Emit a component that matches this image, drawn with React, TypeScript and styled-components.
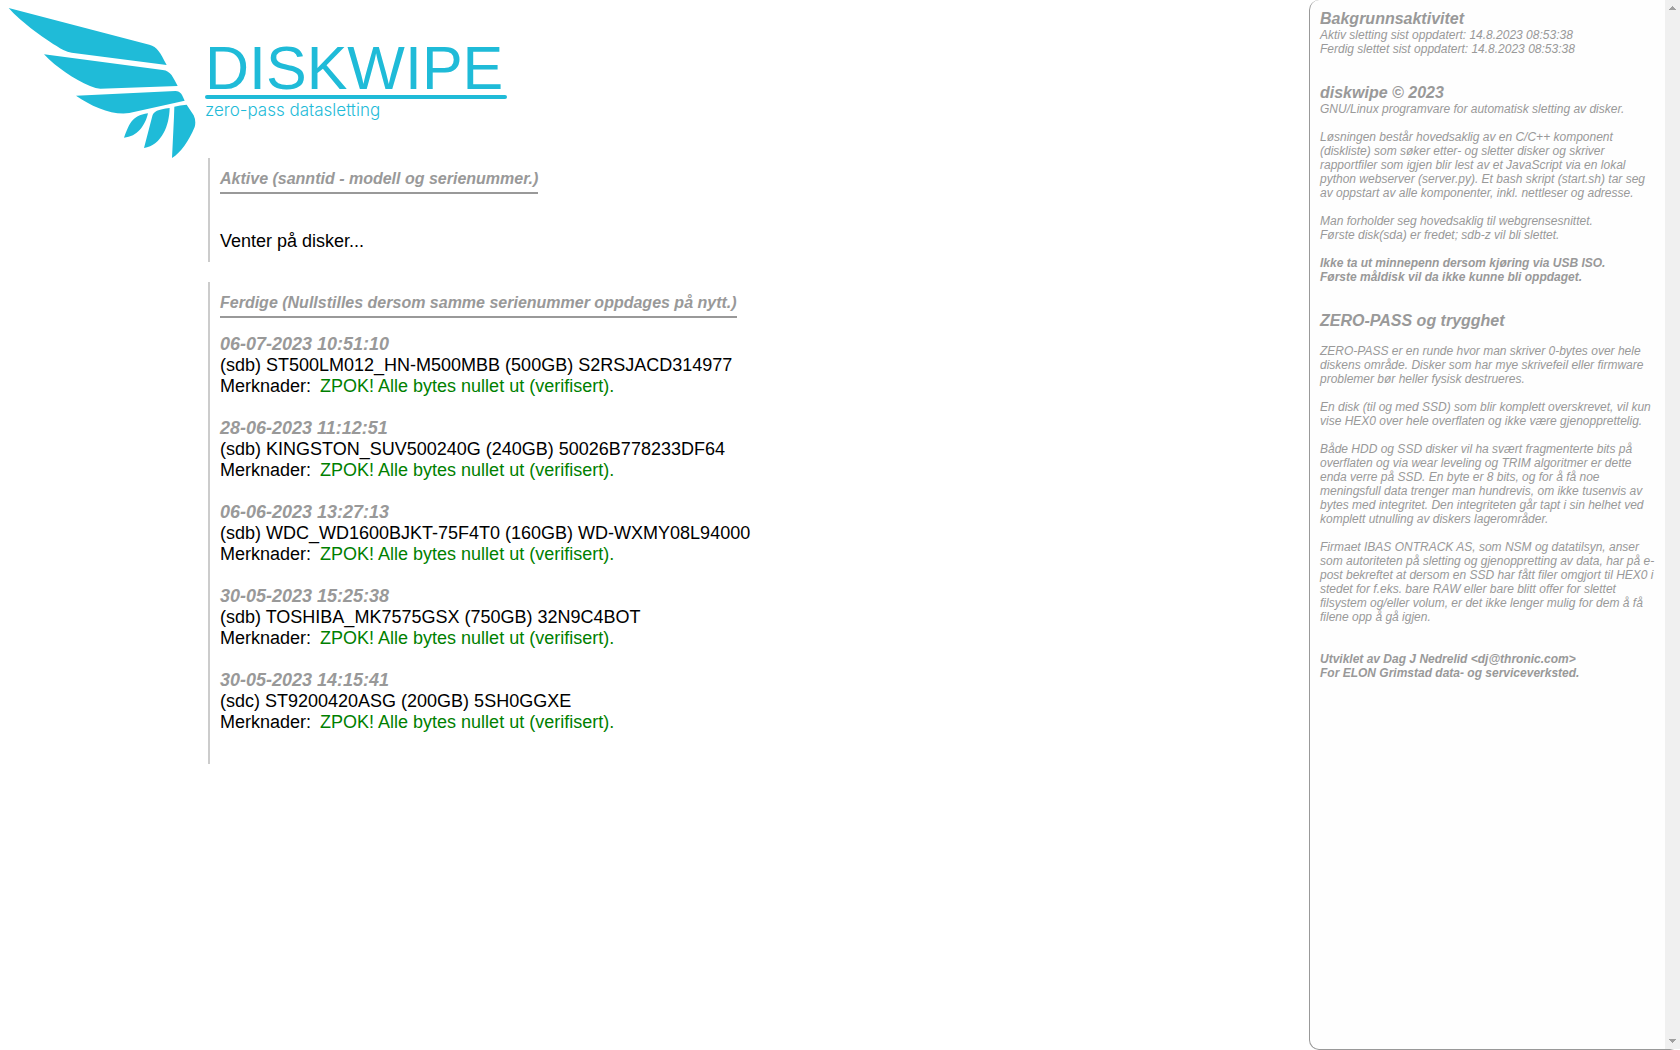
import React, { useRef } from "react";
import styled, { createGlobalStyle } from "styled-components";

const BRAND = "#1fbbd8";
const GREY = "#999";

const GlobalStyle = createGlobalStyle`
  *, *::before, *::after { box-sizing: border-box; }
  body {
    margin: 0;
    background: #fff;
    color: #000;
    font-family: "Liberation Sans", Arial, sans-serif;
    font-size: 18px;
    line-height: 21px;
  }
`;

const Page = styled.div`
  display: grid;
  grid-template-columns: minmax(0, 1fr) 371px;
  align-items: start;
  min-height: 100vh;
`;

const Main = styled.main`
  display: flex;
  flex-direction: column;
  gap: 20px;
  padding: 8px;
`;

const Top = styled.div``;

const Logo = styled.header`
  display: flex;
  gap: 9px;
  height: 150px;
  color: ${BRAND};
`;

const Wing = styled.svg`
  flex: none;
  width: 188px;
  height: 150px;
  fill: currentColor;
`;

const Wordmark = styled.div`
  display: flex;
  flex-direction: column;
  width: 302px;
  padding-top: 34px;
  white-space: nowrap;
`;

const Brand = styled.h1`
  margin: 0 0 1px;
  font-size: 61px;
  font-weight: normal;
  line-height: 52px;
`;

const Rule = styled.div`
  flex: none;
  height: 4px;
  border-radius: 2px;
  background: currentColor;
`;

const Tagline = styled.div`
  font-family: Inter, "Open Sans", sans-serif;
  font-size: 17px;
  font-weight: 300;
  line-height: 22px;
`;

const Section = styled.section`
  margin-left: 200px;
  padding: 12px 10px 10px;
  border-left: 2px solid #ccc;
`;

const SectionTitle = styled.h2`
  width: fit-content;
  margin: 0 0 16px;
  padding-bottom: 4px;
  border-bottom: 2px solid ${GREY};
  color: ${GREY};
  font-size: 16px;
  font-style: italic;
  line-height: 18px;
`;

const Waiting = styled.p`
  margin: 0;
  padding-top: 21px;
`;

const Records = styled.ul`
  margin: 0;
  padding: 0;
  list-style: none;
`;

const RecordItem = styled.li`
  padding-bottom: 21px;
`;

const Stamp = styled.time`
  display: block;
  color: ${GREY};
  font-style: italic;
  font-weight: bold;
`;

const Line = styled.div``;

const Result = styled.span`
  margin-left: 4px;
  color: green;
`;

const Side = styled.aside`
  position: sticky;
  top: 0;
  display: flex;
  height: 100vh;
  border: 0 solid ${GREY};
  border-width: 0 0 1px 1px;
  border-radius: 10px;
  background: #fefefe;
`;

const SideText = styled.div`
  flex: 1;
  min-width: 0;
  padding: 10px;
  overflow-y: auto;
  scrollbar-width: none;
  color: ${GREY};
  font-size: 12px;
  font-style: italic;
  line-height: 14px;
`;

const SideBlock = styled.section`
  margin-bottom: 28px;
`;

const SideTitle = styled.h2<{ $spaced?: boolean }>`
  margin: 0 0 ${(p) => (p.$spaced ? 14 : 0)}px;
  font-size: 16px;
  line-height: 18px;
`;

const Para = styled.p<{ $strong?: boolean }>`
  margin: 0;
  font-weight: ${(p) => (p.$strong ? "bold" : "normal")};
  & + & { margin-top: 14px; }
`;

const ScrollTrack = styled.div`
  display: flex;
  flex: none;
  flex-direction: column;
  justify-content: space-between;
  width: 15px;
  background: #f0f0f0;
`;

const ScrollButton = styled.button`
  display: block;
  width: 15px;
  height: 16px;
  padding: 6px 4px;
  border: 0;
  background: none;
  svg { display: block; fill: #a0a0a0; }
`;

const records = [
  ["06-07-2023 10:51:10", "(sdb) ST500LM012_HN-M500MBB (500GB) S2RSJACD314977"],
  ["28-06-2023 11:12:51", "(sdb) KINGSTON_SUV500240G (240GB) 50026B778233DF64"],
  ["06-06-2023 13:27:13", "(sdb) WDC_WD1600BJKT-75F4T0 (160GB) WD-WXMY08L94000"],
  ["30-05-2023 15:25:38", "(sdb) TOSHIBA_MK7575GSX (750GB) 32N9C4BOT"],
  ["30-05-2023 14:15:41", "(sdc) ST9200420ASG (200GB) 5SH0GGXE"],
];

export default function App() {
  const side = useRef<HTMLDivElement>(null);
  const scroll = (top: number) => side.current?.scrollBy({ top });

  return (
    <>
      <GlobalStyle />
      <Page>
        <Main>
          <Top>
            <Logo>
              <Wing viewBox="24 24 564 450" aria-hidden="true">
                <path d="M26 24L448 134C472 140 480 157 500 195L215 158Q203 157 190 150C140 122 65 68 26 24Z" />
                <path d="M132 163L488 210C513 213 519 232 533 258L301 266Q288 266 270 258C222 238 170 203 132 163Z" />
                <path d="M228 287L526 273C543 273 547 286 554 302L388 339C340 347 275 320 228 287Z" />
                <path d="M444 340C436 376 412 411 372 413C386 378 393 346 444 340Z" />
                <path d="M509 324C508 376 486 435 432 444L456 352C460 332 474 329 509 324Z" />
                <path d="M523 320Q540 315 560 314L581 346Q589 363 584 381C566 423 543 458 516 474L522 350Z" />
              </Wing>
              <Wordmark>
                <Brand>DISKWIPE</Brand>
                <Rule />
                <Tagline>zero-pass datasletting</Tagline>
              </Wordmark>
            </Logo>
            <Section>
              <SectionTitle>Aktive (sanntid - modell og serienummer.)</SectionTitle>
              <Waiting>Venter på disker...</Waiting>
            </Section>
          </Top>
          <Section>
            <SectionTitle>
              Ferdige (Nullstilles dersom samme serienummer oppdages på nytt.)
            </SectionTitle>
            <Records>
              {records.map(([stamp, disk]) => (
                <RecordItem key={stamp}>
                  <Stamp>{stamp}</Stamp>
                  <Line>{disk}</Line>
                  <Line>
                    Merknader: <Result>ZPOK! Alle bytes nullet ut (verifisert).</Result>
                  </Line>
                </RecordItem>
              ))}
            </Records>
          </Section>
        </Main>

        <Side>
          <SideText ref={side}>
            <SideBlock>
              <SideTitle>Bakgrunnsaktivitet</SideTitle>
              <Para>
                Aktiv sletting sist oppdatert: 14.8.2023 08:53:38
                <br />
                Ferdig slettet sist oppdatert: 14.8.2023 08:53:38
              </Para>
            </SideBlock>
            <SideBlock>
              <SideTitle>diskwipe © 2023</SideTitle>
              <Para>GNU/Linux programvare for automatisk sletting av disker.</Para>
              <Para>
                Løsningen består hovedsaklig av en C/C++ komponent (diskliste) som søker etter- og
                sletter disker og skriver rapportfiler som igjen blir lest av et JavaScript via en
                lokal python webserver (server.py). Et bash skript (start.sh) tar seg av oppstart av
                alle komponenter, inkl. nettleser og adresse.
              </Para>
              <Para>
                Man forholder seg hovedsaklig til webgrensesnittet.
                <br />
                Første disk(sda) er fredet; sdb-z vil bli slettet.
              </Para>
              <Para $strong>
                Ikke ta ut minnepenn dersom kjøring via USB ISO.
                <br />
                Første måldisk vil da ikke kunne bli oppdaget.
              </Para>
            </SideBlock>
            <SideBlock>
              <SideTitle $spaced>ZERO-PASS og trygghet</SideTitle>
              <Para>
                ZERO-PASS er en runde hvor man skriver 0-bytes over hele diskens område. Disker som
                har mye skrivefeil eller firmware problemer bør heller fysisk destrueres.
              </Para>
              <Para>
                En disk (til og med SSD) som blir komplett overskrevet, vil kun vise HEX0 over hele
                overflaten og ikke være gjenopprettelig.
              </Para>
              <Para>
                Både HDD og SSD disker vil ha svært fragmenterte bits på overflaten og via wear
                leveling og TRIM algoritmer er dette enda verre på SSD. En byte er 8 bits, og for å
                få noe meningsfull data trenger man hundrevis, om ikke tusenvis av bytes med
                integritet. Den integriteten går tapt i sin helhet ved komplett utnulling av diskers
                lagerområder.
              </Para>
              <Para>
                Firmaet IBAS ONTRACK AS, som NSM og datatilsyn, anser som autoriteten på sletting og
                gjenoppretting av data, har på e-post bekreftet at dersom en SSD har fått filer
                omgjort til HEX0 i stedet for f.eks. bare RAW eller bare blitt offer for slettet
                filsystem og/eller volum, er det ikke lenger mulig for dem å få filene opp å gå
                igjen.
              </Para>
            </SideBlock>
            <Para $strong>
              Utviklet av Dag J Nedrelid &lt;dj@thronic.com&gt;
              <br />
              For ELON Grimstad data- og serviceverksted.
            </Para>
          </SideText>
          <ScrollTrack>
            <ScrollButton type="button" aria-label="Rull opp" onClick={() => scroll(-40)}>
              <svg width="7" height="4" shapeRendering="crispEdges">
                <path d="M3 0h1v1h1v1h1v1h1v1H0V3h1V2h1V1h1z" />
              </svg>
            </ScrollButton>
            <ScrollButton type="button" aria-label="Rull ned" onClick={() => scroll(40)}>
              <svg width="7" height="4" shapeRendering="crispEdges">
                <path d="M0 0h7v1H6v1H5v1H4v1H3V3H2V2H1V1H0z" />
              </svg>
            </ScrollButton>
          </ScrollTrack>
        </Side>
      </Page>
    </>
  );
}
